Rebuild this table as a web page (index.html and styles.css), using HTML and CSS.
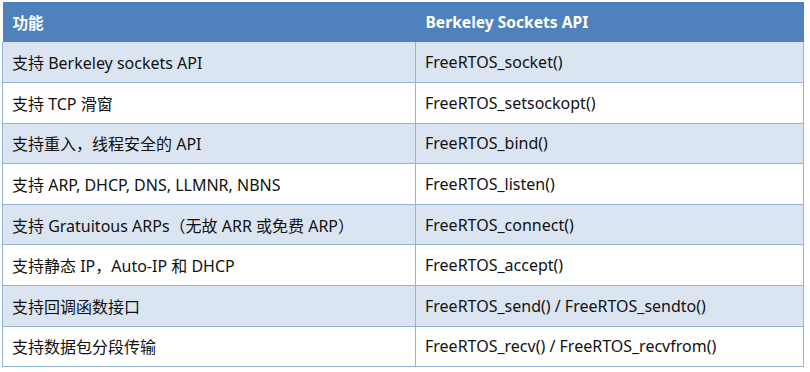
FILE: index.html
```html
<!DOCTYPE html>
<html lang="zh">
<head>
<meta charset="utf-8">
<link rel="stylesheet" href="styles.css">
</head>
<body>
<table class="feat">
  <thead>
    <tr><th class="c1">功能</th><th class="c2">Berkeley Sockets API</th></tr>
  </thead>
  <tbody>
    <tr class="alt"><td>支持 Berkeley sockets API</td><td>FreeRTOS_socket()</td></tr>
    <tr><td>支持 TCP 滑窗</td><td>FreeRTOS_setsockopt()</td></tr>
    <tr class="alt"><td>支持重入，线程安全的 API</td><td>FreeRTOS_bind()</td></tr>
    <tr><td>支持 ARP, DHCP, DNS, LLMNR, NBNS</td><td>FreeRTOS_listen()</td></tr>
    <tr class="alt"><td>支持 Gratuitous ARPs（无故 ARR 或免费 ARP）</td><td>FreeRTOS_connect()</td></tr>
    <tr><td>支持静态 IP，Auto-IP 和 DHCP</td><td>FreeRTOS_accept()</td></tr>
    <tr class="alt"><td>支持回调函数接口</td><td>FreeRTOS_send() / FreeRTOS_sendto()</td></tr>
    <tr><td>支持数据包分段传输</td><td>FreeRTOS_recv() / FreeRTOS_recvfrom()</td></tr>
  </tbody>
</table>
</body>
</html>
```
FILE: styles.css
```css
html, body {
  margin: 0;
  padding: 0;
  background: #ffffff;
}
body {
  padding: 2px 0 0 2px;
  font-family: "Noto Sans", "Noto Sans CJK SC", sans-serif;
  font-size: 16px;
  color: #111111;
}
.feat {
  border-collapse: collapse;
  width: 802px;
  table-layout: fixed;
}
.feat th {
  background: #4f81bd;
  color: #ffffff;
  font-weight: bold;
  font-size: 15.6px;
  text-align: left;
  height: 40px;
  padding: 0 10px;
  box-sizing: border-box;
  border: none;
}
.feat th.c1 { width: 413px; }
.feat td {
  height: 40.6px;
  padding: 0 9px;
  box-sizing: border-box;
  border: 1px solid #95b3d7;
  border-top: none;
  vertical-align: middle;
  white-space: nowrap;
}
.feat tr.alt td {
  background: #dbe5f1;
}
```
